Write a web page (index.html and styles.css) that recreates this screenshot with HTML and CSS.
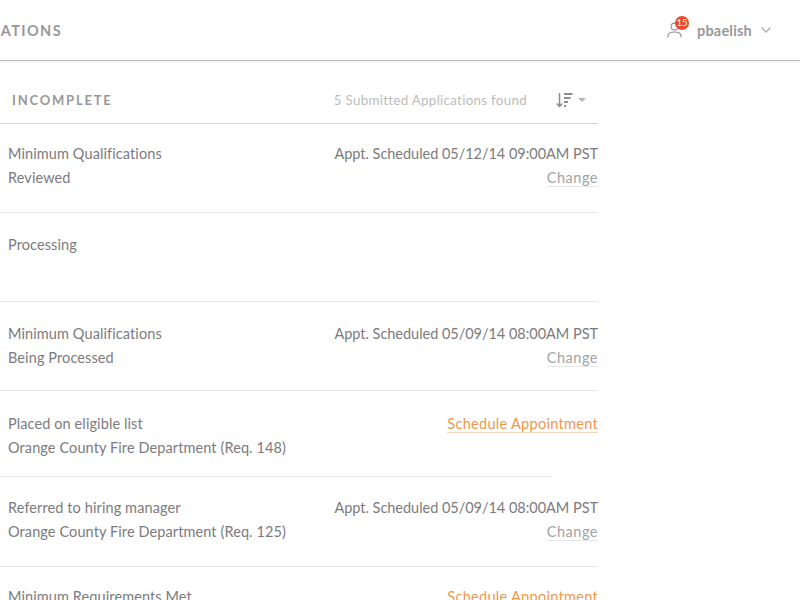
FILE: index.html
```html
<!DOCTYPE html>
<html lang="en">
<head>
<meta charset="utf-8">
<title>Applications</title>
<link rel="stylesheet" href="styles.css">
</head>
<body>
<header class="topbar">
  <div class="crumb"><span>APPLICATIONS</span></div>
  <div class="user">
    <span class="avatar">
      <svg width="15" height="16" viewBox="0 0 15 16" fill="none" stroke="#8f8f8f" stroke-width="1.1"><circle cx="7.500" cy="4.500" r="3.400"/><path d="M1 15.500v-1.500c0-2.600 2.600-4 6.500-4s6.500 1.400 6.500 4v1.500"/></svg>
      <span class="badge">15</span>
    </span>
    <span class="name">pbaelish</span>
    <svg class="chev" width="10" height="6" viewBox="0 0 10 6" fill="none" stroke="#b5b5b5" stroke-width="1.5"><path d="M.5.5 5 5 9.500.5"/></svg>
  </div>
</header>
<main class="panel">
  <div class="head">
    <h2 class="tab">INCOMPLETE</h2>
    <span class="found">5 Submitted Applications found</span>
    <svg class="sort" width="17" height="15" viewBox="0 0 17 15" fill="none" stroke="#8c8c8c"><path d="M3.500 0v13.500M.8 10.500l2.700 3 2.700-3" stroke-width="1.500"/><path d="M8 1h8.500M8 5h6.500M8 9h4M8 13h2" stroke-width="2"/></svg>
    <span class="caret"></span>
  </div>
  <section class="row first">
    <div class="col"><p>Minimum Qualifications</p><p>Reviewed</p></div>
    <div class="col end"><p>Appt. Scheduled 05/12/14 09:00AM PST</p><p><a class="change">Change</a></p></div>
  </section>
  <section class="row">
    <div class="col"><p>Processing</p></div>
  </section>
  <section class="row">
    <div class="col"><p>Minimum Qualifications</p><p>Being Processed</p></div>
    <div class="col end"><p>Appt. Scheduled 05/09/14 08:00AM PST</p><p><a class="change">Change</a></p></div>
  </section>
  <section class="row eligible">
    <div class="col"><p>Placed on eligible list</p><p>Orange County Fire Department (Req. 148)</p></div>
    <div class="col end"><p><a class="schedule">Schedule Appointment</a></p></div>
  </section>
  <hr class="divider">
  <section class="row referred">
    <div class="col"><p>Referred to hiring manager</p><p>Orange County Fire Department (Req. 125)</p></div>
    <div class="col end"><p>Appt. Scheduled 05/09/14 08:00AM PST</p><p><a class="change">Change</a></p></div>
  </section>
  <section class="row last">
    <div class="col"><p>Minimum Requirements Met</p></div>
    <div class="col end"><p><a class="schedule">Schedule Appointment</a></p></div>
  </section>
</main>
</body>
</html>
```
FILE: styles.css
```css
html, body {
  margin: 0;
  height: 600px;
  overflow: hidden;
  background: #fff;
  font-family: "Lato", "Liberation Sans", sans-serif;
  color: #7b7b7d;
}
.topbar {
  height: 60px;
  display: flex;
  justify-content: space-between;
  align-items: center;
  border-bottom: 1px solid #bdbdbd;
  box-shadow: 0 1px 2px rgba(0, 0, 0, .08);
}
.crumb {
  width: 62px;
  display: flex;
  justify-content: flex-end;
  overflow: hidden;
  font-size: 14.500px;
  font-weight: 700;
  letter-spacing: 1.400px;
  color: #98989a;
}
.crumb span { flex: none; }
.user {
  display: flex;
  align-items: center;
  padding-right: 29px;
}
.avatar {
  position: relative;
  display: flex;
  margin-right: 15px;
}
.badge {
  position: absolute;
  left: 8px;
  top: -6px;
  width: 14px;
  height: 14px;
  border-radius: 50%;
  background: #ea4b2b;
  color: #fff;
  font-size: 9.500px;
  line-height: 14px;
  text-align: center;
}
.name {
  font-size: 14.500px;
  font-weight: 700;
  letter-spacing: .2px;
  color: #98989a;
  margin-right: 9px;
}
.panel { width: 598px; }
.head {
  height: 63px;
  padding-top: 16px;
  display: flex;
  align-items: center;
  border-bottom: 1px solid #d4d4d4;
  box-sizing: border-box;
}
.tab {
  margin: 0 0 0 12px;
  flex: 1;
  font-size: 13px;
  font-weight: 700;
  letter-spacing: 1.800px;
  color: #98989a;
}
.found {
  font-size: 13.400px;
  letter-spacing: .28px;
  color: #bcbcbc;
  margin-right: 29px;
}
.sort { margin-right: 5px; }
.caret {
  border: 4px solid transparent;
  border-top: 4px solid #b5b5b5;
  border-bottom: 0;
  margin-right: 12px;
}
.row {
  height: 89px;
  box-sizing: border-box;
  display: flex;
  justify-content: space-between;
  padding: 20px 0 0 8px;
  border-bottom: 1px solid #e6e6e6;
  font-size: 14.500px;
  letter-spacing: .1px;
}
.row.first { padding-top: 18px; }
.row.last { padding-top: 18px; }
.row.eligible {
  height: 85px;
  padding-top: 21px;
  border-bottom: 0;
}
.row.referred {
  height: 90px;
  padding-top: 19px;
}
.divider {
  width: 552px;
  height: 1px;
  margin: 0;
  border: 0;
  background: #e6e6e6;
}
.col p { margin: 0; height: 24px; line-height: 23px; }
.end { text-align: right; letter-spacing: -.03px; }
.change {
  color: #a3a3a5;
  letter-spacing: .5px;
  border-bottom: 1px solid #e6e6e6;
}
.schedule {
  color: #f0984a;
  letter-spacing: .3px;
  border-bottom: 1px solid #f9d7b7;
}
```
